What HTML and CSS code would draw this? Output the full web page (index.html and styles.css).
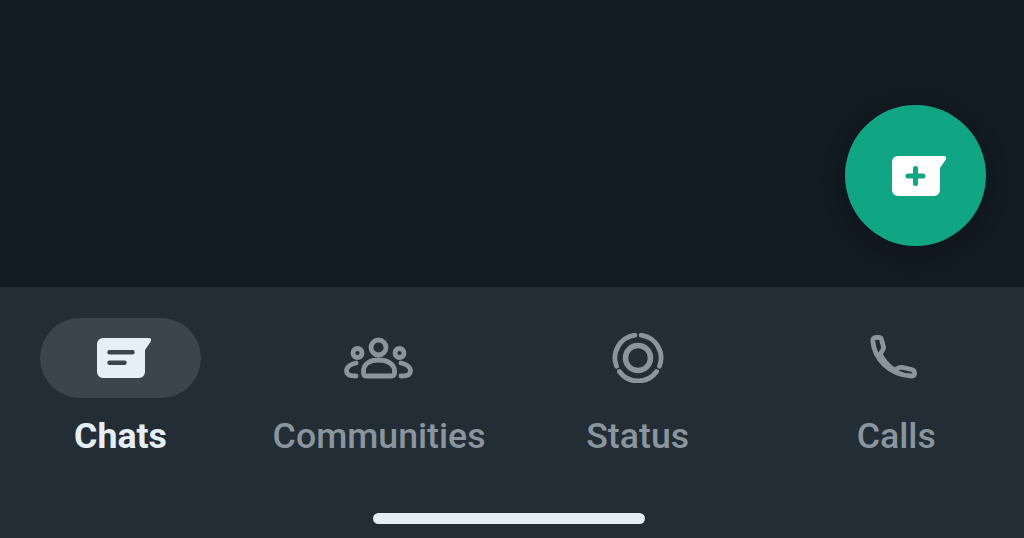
FILE: index.html
```html
<!DOCTYPE html>
<html lang="en" dir="ltr">

<head>
    <meta charset="utf-8">
    <title>Chats</title>
    <link rel="stylesheet" href="styles.css">
</head>

<body>
    <main class="content">
        <button class="fab" type="button" aria-label="New chat">
            <svg class="bubbleIcon" viewBox="0 0 54 40" width="54" height="40">
                <path class="bubble" d="M6 0H51.500Q55.500 0 53.800 3.500L48 12V34A6 6 0 0 1 42 40H6A6 6 0 0 1 0 34V6A6 6 0 0 1 6 0Z" />
                <path class="plus" d="M23.500 12.500V27.500M16 20H31" />
            </svg>
        </button>
    </main>

    <nav class="tabs">
        <div class="tabRow">
            <a class="tab active">
                <span class="pill">
                    <svg class="bubbleIcon" viewBox="0 0 54 40" width="54" height="40">
                        <path class="bubble" d="M6 0H51.500Q55.500 0 53.800 3.500L48 12V34A6 6 0 0 1 42 40H6A6 6 0 0 1 0 34V6A6 6 0 0 1 6 0Z" />
                        <path class="bubbleLines" d="M12.500 14.300H35.500M12.500 24.700H27.500" />
                    </svg>
                </span>
                <span class="tabLabel">Chats</span>
            </a>
            <a class="tab">
                <span class="pill">
                    <svg class="line" viewBox="0 0 80 50" width="80" height="50">
                        <circle cx="39.500" cy="14.500" r="7.500" />
                        <circle cx="18.500" cy="20" r="4.500" />
                        <circle cx="60.500" cy="20" r="4.500" />
                        <path d="M27 43H52Q55.500 43 55.500 40V38C55.500 31 48 27 39.500 27C31 27 24.500 31 24.500 38V40Q24.500 43 27 43Z" />
                        <path d="M17 30C12 31 7.500 34 7.500 38C7.500 41.500 10 43 17 43" />
                        <path d="M62 30C67 31 71.500 34 71.500 38C71.500 41.500 69 43 62 43" />
                    </svg>
                </span>
                <span class="tabLabel">Communities</span>
            </a>
            <a class="tab">
                <span class="pill">
                    <svg class="line" viewBox="0 0 80 50" width="80" height="50">
                        <circle class="thick" cx="40" cy="25" r="12.500" />
                        <path d="M43.200 2.200A23 23 0 0 1 61.500 33.200" />
                        <path d="M58.600 38.500A23 23 0 0 1 21.400 38.500" />
                        <path d="M18.500 33.200A23 23 0 0 1 36.800 2.200" />
                    </svg>
                </span>
                <span class="tabLabel">Status</span>
            </a>
            <a class="tab">
                <span class="pill">
                    <svg class="line" viewBox="0 0 80 50" width="80" height="50">
                        <path d="M20 4.500H23Q25 4.500 25.500 6.500L27.500 14Q27.800 15.500 26.800 17L24.200 21C27.500 28 32 33 38.500 37L43 34.800Q45 34 47 34.500L55.500 36.500Q58.500 37.300 58.500 40V41Q58.500 43.200 55.500 43C33 41.500 18.500 26 16.800 8Q16.600 4.500 20 4.500Z" />
                    </svg>
                </span>
                <span class="tabLabel">Calls</span>
            </a>
        </div>
        <div class="homeBar"></div>
    </nav>
</body>

</html>
```

FILE: styles.css
```css
html,
body {
    margin: 0;
    height: 100%;
}

body {
    display: flex;
    flex-direction: column;
    height: 538px;
    overflow: hidden;
    background: #121a22;
    font-family: Roboto, "Liberation Sans", sans-serif;
}

.content {
    display: flex;
    justify-content: flex-end;
    align-items: flex-start;
    height: 287px;
    padding: 105px 38px 0 0;
    box-sizing: border-box;
    background: #121a22;
}

.fab {
    display: flex;
    align-items: center;
    justify-content: center;
    width: 141px;
    height: 141px;
    padding: 0;
    border: 0;
    border-radius: 50%;
    background: #11a683;
    box-shadow: 0 6px 24px rgba(0, 0, 0, 0.2);
}

.bubbleIcon {
    margin-left: 6px;
}

.bubble {
    fill: #ffffff;
}

.plus {
    fill: none;
    stroke: #11a683;
    stroke-width: 5;
    stroke-linecap: round;
}

.tabs {
    flex: 1;
    display: flex;
    flex-direction: column;
    background: #232d36;
}

.tabRow {
    display: flex;
    gap: 97.600px;
    padding: 31px 0 0 40px;
}

.tab {
    display: flex;
    flex-direction: column;
    align-items: center;
    width: 161px;
    color: #8a959d;
}

.pill {
    display: flex;
    align-items: center;
    justify-content: center;
    width: 161px;
    height: 80px;
    border-radius: 40px;
}

.tab.active {
    color: #e6eff5;
}

.tab.active .pill {
    background: #3a454c;
}

.tab.active .bubble {
    fill: #e6eff5;
}

.bubbleLines {
    fill: none;
    stroke: #3a454c;
    stroke-width: 4.5;
    stroke-linecap: round;
}

.line {
    fill: none;
    stroke: #8a959d;
    stroke-width: 4.800;
    stroke-linecap: round;
    stroke-linejoin: round;
}

.line .thick {
    stroke-width: 5.500;
}

.tabLabel {
    margin-top: 18px;
    font-size: 35.700px;
    line-height: 40px;
    font-weight: 500;
    white-space: nowrap;
}

.tab.active .tabLabel {
    font-weight: 700;
}

.homeBar {
    align-self: flex-start;
    width: 272px;
    height: 11px;
    margin: 57px 0 0 373px;
    border-radius: 6px;
    background: #e4edf5;
}
```
